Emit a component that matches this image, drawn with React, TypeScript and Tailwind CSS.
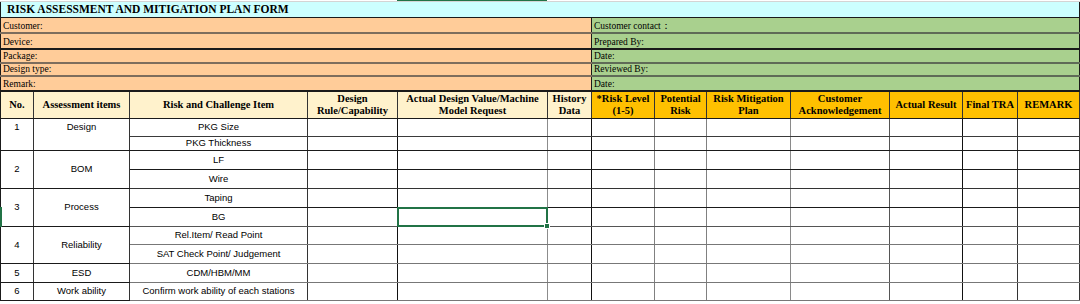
import React from 'react';

const serif = { fontFamily: '"Liberation Serif", "Times New Roman", serif' };
const sans = { fontFamily: '"Liberation Sans", Arial, sans-serif' };

type Item = { text: string; h: string; line: string; selected?: boolean };
type Group = { no: string; name: string; top?: boolean; items: Item[] };

const groups: Group[] = [
  {
    no: '1',
    name: 'Design',
    top: true,
    items: [
      { text: 'PKG Size', h: 'h-[18px]', line: 'border-b-[#3a3a3a]' },
      { text: 'PKG Thickness', h: 'h-[14px]', line: 'border-b-[#1a1a1a]' },
    ],
  },
  {
    no: '2',
    name: 'BOM',
    items: [
      { text: 'LF', h: 'h-[19px]', line: 'border-b-[#1a1a1a]' },
      { text: 'Wire', h: 'h-[19px]', line: 'border-b-[#333333]' },
    ],
  },
  {
    no: '3',
    name: 'Process',
    items: [
      { text: 'Taping', h: 'h-[19px]', line: 'border-b-[#1a1a1a]' },
      { text: 'BG', h: 'h-[19px]', line: 'border-b-[#555555]', selected: true },
    ],
  },
  {
    no: '4',
    name: 'Reliability',
    items: [
      { text: 'Rel.Item/ Read Point', h: 'h-[18px]', line: 'border-b-[#777777]' },
      { text: 'SAT Check Point/ Judgement', h: 'h-[19px]', line: 'border-b-[#777777]' },
    ],
  },
  {
    no: '5',
    name: 'ESD',
    items: [{ text: 'CDM/HBM/MM', h: 'h-[19px]', line: 'border-b-[#777777]' }],
  },
  {
    no: '6',
    name: 'Work ability',
    items: [{ text: 'Confirm work ability of each stations', h: 'h-[18px]', line: 'border-b-[#777777]' }],
  },
];

// right-edge line colour of the ten empty columns
const emptyCols = [
  'border-r-[#111111]',
  'border-r-[#8c8c8c]',
  'border-r-[#111111]',
  'border-r-[#808080]',
  'border-r-[#808080]',
  'border-r-[#8a8a8a]',
  'border-r-[#555555]',
  'border-r-[#111111]',
  'border-r-[#333333]',
  'border-r-[#333333]',
];

const infoRows = [
  { left: 'Customer:', right: 'Customer contact：', h: 'h-[16px]', lineL: 'border-b-[#7d6d5d]', lineR: 'border-b-[#5f6b57]' },
  { left: 'Device:', right: 'Prepared By:', h: 'h-[16px]', lineL: 'border-b-[#1a1a1a]', lineR: 'border-b-[#1a1a1a]' },
  { left: 'Package:', right: 'Date:', h: 'h-[14px]', lineL: 'border-b-[#7d6d5d]', lineR: 'border-b-[#5f6b57]' },
  { left: 'Design type:', right: 'Reviewed By:', h: 'h-[13px]', lineL: 'border-b-[#7d6d5d]', lineR: 'border-b-[#5f6b57]' },
  { left: 'Remark:', right: 'Date:', h: 'h-[15px]', lineL: 'border-b-[#1a1a1a]', lineR: 'border-b-[#1a1a1a]' },
];

const creamHead = 'bg-[#fff2cc] border-r border-b border-r-[#333333] border-b-[#1a1a1a] font-bold text-center leading-[12px] px-0.5';
const goldHead = 'bg-[#ffc000] border-r border-b border-r-[#333333] border-b-[#1a1a1a] font-bold text-center leading-[12px] px-0.5';

export default function App() {
  return (
    <div className="relative w-[1080px] h-[304px] bg-white overflow-hidden text-black">
      {/* column header selection marker */}
      <div className="flex h-[2px] border-b border-[#d4d4d4]">
        <div className="w-[397px]" />
        <div className="w-[150px] h-[1px] bg-[#217346]" />
      </div>

      <table className="table-fixed border-collapse w-[1079px]" style={serif}>
        <colgroup>
          <col className="w-[33px]" />
          <col className="w-[96px]" />
          <col className="w-[178px]" />
          <col className="w-[90px]" />
          <col className="w-[150px]" />
          <col className="w-[44px]" />
          <col className="w-[63px]" />
          <col className="w-[52px]" />
          <col className="w-[84px]" />
          <col className="w-[99px]" />
          <col className="w-[73px]" />
          <col className="w-[55px]" />
          <col className="w-[62px]" />
        </colgroup>
        <tbody>
          <tr className="h-[15px]">
            <td
              colSpan={13}
              className="bg-[#ccffff] border-l border-r border-b border-[#1a1a1a] font-bold text-[11.5px] leading-none pl-[6px] pt-px"
            >
              RISK ASSESSMENT AND MITIGATION PLAN FORM
            </td>
          </tr>

          {infoRows.map((r, i) => (
            <tr key={i} className={r.h}>
              <td
                colSpan={6}
                className={`bg-[#ffcc99] border-l border-l-[#1a1a1a] border-r border-r-[#1a1a1a] border-b-2 ${r.lineL} text-[9.5px] leading-none pl-[2px] align-bottom pb-px`}
              >
                {r.left}
              </td>
              <td
                colSpan={7}
                className={`bg-[#a9d08e] border-r border-r-[#1a1a1a] border-b-2 ${r.lineR} text-[9.5px] leading-none pl-[2px] align-bottom pb-px`}
              >
                {r.right}
              </td>
            </tr>
          ))}

          <tr className="h-[27px] text-[10.5px]">
            <td className={`${creamHead} border-l border-l-[#1a1a1a]`}>No.</td>
            <td className={creamHead}>Assessment items</td>
            <td className={creamHead}>Risk and Challenge Item</td>
            <td className={creamHead}>Design Rule/Capability</td>
            <td className={`${creamHead} px-1`}>Actual Design Value/Machine Model Request</td>
            <td className={creamHead}>History Data</td>
            <td className={goldHead}>*Risk Level (1-5)</td>
            <td className={goldHead}>Potential Risk</td>
            <td className={goldHead}>Risk Mitigation Plan</td>
            <td className={goldHead}>Customer Acknowledgement</td>
            <td className={goldHead}>Actual Result</td>
            <td className={goldHead}>Final TRA</td>
            <td className={goldHead}>REMARK</td>
          </tr>

          {groups.map((g) =>
            g.items.map((it, idx) => (
              <tr key={g.no + it.text} className={`${it.h} text-[9.5px]`} style={sans}>
                {idx === 0 && (
                  <>
                    <td
                      rowSpan={g.items.length}
                      className={`border-l border-l-[#1a1a1a] border-r border-r-[#333333] border-b border-b-[#1a1a1a] text-center leading-none ${
                        g.top ? 'align-top pt-[3px]' : 'align-middle'
                      }`}
                    >
                      {g.no}
                    </td>
                    <td
                      rowSpan={g.items.length}
                      className={`border-r border-r-[#333333] border-b border-b-[#1a1a1a] text-center leading-none ${
                        g.top ? 'align-top pt-[3px]' : 'align-middle'
                      }`}
                    >
                      {g.name}
                    </td>
                  </>
                )}
                <td className={`border-r border-r-[#333333] border-b ${it.line} text-center leading-none whitespace-nowrap`}>
                  {it.text}
                </td>
                {emptyCols.map((c, ci) => (
                  <td key={ci} className={`border-r border-b ${c} ${it.line} ${it.selected && ci === 1 ? 'relative' : ''}`}>
                    {it.selected && ci === 1 && (
                      <div className="absolute -left-px -top-px -right-px -bottom-px border-2 border-[#217346]">
                        <div className="absolute -right-[4px] -bottom-[4px] w-[6px] h-[6px] bg-[#217346] border border-white" />
                      </div>
                    )}
                  </td>
                ))}
              </tr>
            ))
          )}
        </tbody>
      </table>

      {/* row header selection marker */}
      <div className="absolute left-0 top-[207px] w-[2px] h-[20px] bg-[#217346]" />
    </div>
  );
}
